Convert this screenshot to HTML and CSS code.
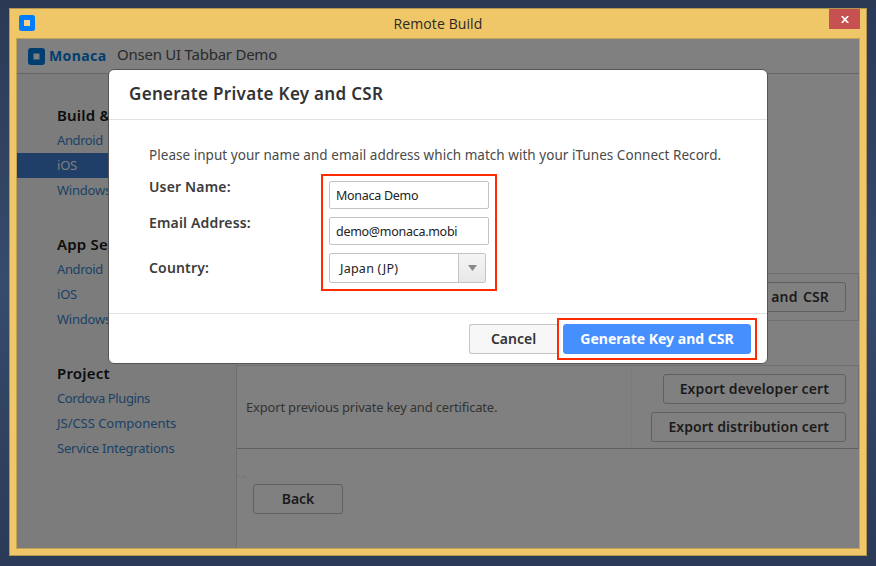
FILE: index.html
```html
<!DOCTYPE html>
<html lang="en">
<head>
<meta charset="utf-8">
<title>Remote Build</title>
<link rel="stylesheet" href="styles.css">
</head>
<body>
<div class="window">
  <div class="titlebar">
    <svg class="app-icon" width="16" height="16" viewBox="0 0 16 16"><rect width="16" height="16" rx="2.5" fill="#007dff"/><rect x="5" y="5" width="6" height="6" fill="#f3d48a"/></svg>
    <span class="window-title">Remote Build</span>
    <span class="close"><svg width="8" height="7" viewBox="0 0 8 7"><path d="M.8 0 7.2 7M7.2 0 .8 7" stroke="#fff" stroke-width="1.7"/></svg></span>
  </div>
  <div class="content">
    <header class="topbar">
      <svg width="17" height="17" viewBox="0 0 17 17"><rect width="17" height="17" rx="3" fill="#003d70"/><rect x="5.5" y="5.5" width="6" height="6" fill="#808080"/></svg>
      <span class="brand">Monaca</span>
      <span class="project">Onsen UI Tabbar Demo</span>
    </header>
    <div class="columns">
      <nav class="sidebar">
        <section class="group">
          <h3>Build &amp; Export</h3>
          <a class="tight">Android</a>
          <a class="active">iOS</a>
          <a>Windows</a>
        </section>
        <section class="group">
          <h3>App Settings</h3>
          <a class="tight">Android</a>
          <a>iOS</a>
          <a>Windows</a>
        </section>
        <section class="group">
          <h3>Project</h3>
          <a class="tight">Cordova Plugins</a>
          <a class="wide">JS/CSS Components</a>
          <a>Service Integrations</a>
        </section>
      </nav>
      <main class="main">
        <div class="row row-key"><span class="dim-button key">Generate Key and CSR</span></div>
        <div class="row row-export">
          <div class="desc">Export previous private key and certificate.</div>
          <div class="actions">
            <span class="dim-button dev">Export developer cert</span>
            <span class="dim-button dist">Export distribution cert</span>
          </div>
        </div>
        <svg class="speck" width="10" height="3" viewBox="0 0 10 3"><path d="M0 .5h2M4 2.500q0-2 2.500-2t2.500 2" fill="none" stroke="#707070" stroke-width=".8"/></svg>
        <span class="dim-button back">Back</span>
      </main>
    </div>
  </div>
</div>
<div class="modal">
  <div class="modal-head">Generate Private Key and CSR</div>
  <div class="modal-body">
    <p>Please input your name and email address which match with your iTunes Connect Record.</p>
    <div class="form">
      <div class="labels"><span>User Name:</span><span>Email Address:</span><span class="country">Country:</span></div>
      <div class="fields">
        <div class="input">Monaca Demo</div>
        <div class="input">demo@monaca.mobi</div>
        <div class="select"><span>Japan (JP)</span><i><svg width="9" height="6" viewBox="0 0 9 6"><path d="M0 0h9L4.500 6z" fill="#888"/></svg></i></div>
      </div>
    </div>
  </div>
  <div class="modal-foot">
    <span class="cancel">Cancel</span>
    <div class="highlight"><span class="primary">Generate Key and CSR</span></div>
  </div>
</div>
</body>
</html>
```
FILE: styles.css
```css
* { box-sizing: border-box; }
body {
  margin: 0;
  width: 876px;
  height: 566px;
  padding: 8px 9px 10px;
  overflow: hidden;
  background: linear-gradient(#2b3955, #374b6d 50%, #2b3a57);
  font: 13px "Noto Sans", sans-serif;
  white-space: nowrap;
}
.window {
  width: 858px;
  height: 548px;
  border: 1px solid #b4974f;
  background: #efc769;
  padding: 0 6px 6px;
}
.titlebar {
  height: 29px;
  display: flex;
  align-items: center;
  position: relative;
}
.app-icon { margin-left: 3px; margin-bottom: 1px; }
.window-title {
  flex: 1;
  margin-left: 12px;
  text-align: center;
  font: 14px "Open Sans", sans-serif;
  letter-spacing: .1px;
  color: #2b2923;
}
.close {
  width: 31px;
  height: 20px;
  align-self: flex-start;
  display: flex;
  align-items: center;
  justify-content: center;
  padding-left: 1px;
  padding-top: 1px;
  background: #c75050;
}
.content {
  width: 844px;
  height: 511px;
  border: 1px solid #c2a257;
  background: #808080;
  display: flex;
  flex-direction: column;
}
.topbar {
  height: 35px;
  border-bottom: 1px solid #666;
  display: flex;
  align-items: center;
  padding: 0 0 1px 11px;
}
.topbar svg { margin-top: 1px; }
.brand {
  width: 68px;
  margin-left: 4px;
  font-size: 14px;
  font-weight: 700;
  letter-spacing: .4px;
  color: #003f70;
}
.project { margin-bottom: 3px; font-size: 15px; letter-spacing: -.24px; color: #2a2a2a; }
.columns { flex: 1; display: flex; }
.sidebar {
  width: 220px;
  padding-top: 29px;
  display: flex;
  flex-direction: column;
  gap: 29px;
  background: #7c7c7c;
  border-right: 1px solid #6f6f6f;
}
.group { display: flex; flex-direction: column; }
.group h3 {
  margin: 0;
  height: 25px;
  line-height: 24px;
  padding-left: 40px;
  font-size: 15px;
  font-weight: 600;
  letter-spacing: .2px;
  color: #0c0c0c;
}
.group a {
  height: 25px;
  line-height: 25px;
  padding-left: 40px;
  color: #1b4165;
  letter-spacing: -.22px;
}
.group .tight { letter-spacing: -.4px; }
.group .wide { letter-spacing: -.03px; }
.group .active { background: #203f68; color: #808080; }
.main {
  flex: 1;
  padding-top: 199px;
  display: flex;
  flex-direction: column;
  align-items: flex-start;
}
.row {
  width: 622px;
  display: flex;
  border: 1px solid #707070;
  border-left: 0;
}
.row-key { height: 48px; justify-content: flex-end; padding: 8px 12px 0 0; }
.row-export { height: 84px; margin-top: 44px; border-bottom-color: #606060; }
.desc {
  width: 395px;
  padding-left: 9px;
  border-right: 1px solid #7b7b7b;
  line-height: 82px;
  letter-spacing: -.19px;
  color: #333;
}
.actions {
  flex: 1;
  display: flex;
  flex-direction: column;
  align-items: flex-end;
  gap: 8px;
  padding: 8px 12px 0 0;
}
.dim-button, .cancel, .primary {
  height: 30px;
  line-height: 28px;
  padding: 0 16px;
  border: 1px solid #606060;
  border-radius: 3px;
  font-size: 14px;
  font-weight: 600;
  text-align: center;
  color: #1b1b1b;
}
.key { letter-spacing: .15px; word-spacing: 1.5px; }
.dev { letter-spacing: .1px; }
.dist { letter-spacing: .05px; }
.speck { margin: 27px 0 0 0; }
.back { width: 90px; margin: 5px 0 0 16px; }
.modal {
  position: absolute;
  left: 108px;
  top: 69px;
  width: 660px;
  height: 295px;
  border: 1px solid #555;
  border-radius: 6px;
  background: #fff;
  display: flex;
  flex-direction: column;
}
.modal-head {
  height: 50px;
  padding-left: 20px;
  border-bottom: 1px solid #e2e2e2;
  line-height: 47px;
  font-size: 17px;
  font-weight: 600;
  letter-spacing: .3px;
  color: #333;
}
.modal-body { height: 193px; padding: 25px 0 0 40px; }
.modal-body p { margin: 0; line-height: 20px; font-size: 13.5px; letter-spacing: .04px; color: #4a4a4a; }
.form { display: flex; margin-top: 9px; }
.labels {
  width: 172px;
  display: flex;
  flex-direction: column;
  padding-top: 3px;
  gap: 16px;
  font-size: 14px;
  font-weight: 600;
  letter-spacing: .16px;
  line-height: 20px;
  color: #3c3c3c;
}
.country { margin-top: 9px; }
.fields {
  width: 176px;
  height: 117px;
  border: 2px solid #ff2a00;
  padding: 5px 6px;
  display: flex;
  flex-direction: column;
  gap: 8px;
}
.input, .select {
  width: 160px;
  height: 28px;
  line-height: 27px;
  padding-left: 6px;
  border: 1px solid #c4c4c4;
  border-radius: 2px;
  font-size: 12.5px;
  letter-spacing: -.28px;
  color: #222;
}
.select { width: 157px; height: 30px; padding-left: 10px; display: flex; justify-content: space-between; letter-spacing: .25px; line-height: 29px; }
.select i {
  width: 27px;
  display: flex;
  align-items: center;
  justify-content: center;
  border-left: 1px solid #c4c4c4;
  background: linear-gradient(#f5f5f5, #e8e8e8);
}
.modal-foot {
  flex: 1;
  border-top: 1px solid #e2e2e2;
  display: flex;
  justify-content: flex-end;
  align-items: flex-start;
  padding: 4px 10px 0 0;
}
.cancel { width: 88px; margin-top: 6px; border-color: #c4c4c4; border-right: 0; border-radius: 3px 0 0 3px; background: #f7f7f7; color: #333; }
.highlight { width: 200px; height: 42px; border: 2px solid #ff2a00; padding: 4px; }
.primary { display: block; width: 188px; padding: 0; border-color: #468fff; background: #468fff; color: #fff; font-weight: 700; }
```
